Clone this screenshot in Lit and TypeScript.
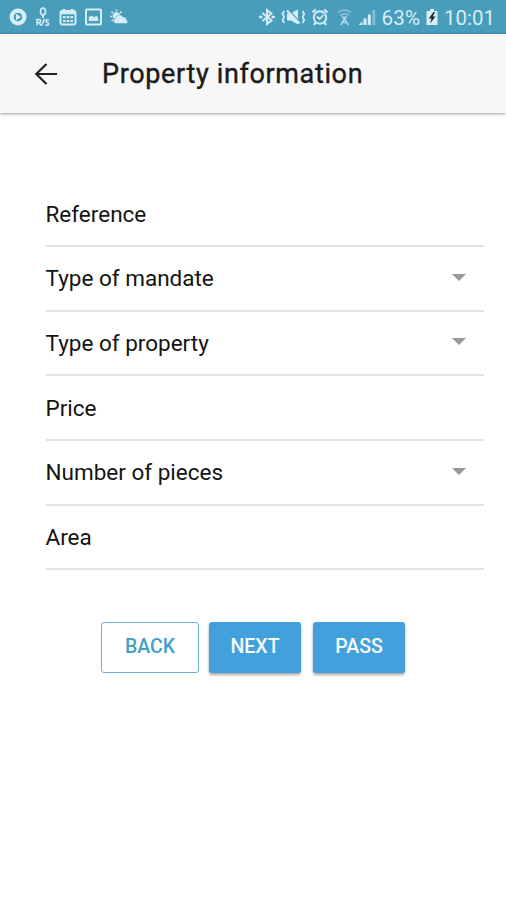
import { LitElement, html, css, svg } from "lit";
import { customElement } from "lit/decorators.js";

interface Field {
  label: string;
  select?: boolean;
}

const FIELDS: Field[] = [
  { label: "Reference" },
  { label: "Type of mandate", select: true },
  { label: "Type of property", select: true },
  { label: "Price" },
  { label: "Number of pieces", select: true },
  { label: "Area" },
];

const icon = (w: number, h: number, content: unknown) => html`
  <svg width=${w} height=${h} viewBox="0 0 ${w} ${h}" fill="none" stroke="currentColor">${content}</svg>
`;

@customElement("status-bar")
export class StatusBar extends LitElement {
  static styles = css`
    :host {
      display: flex;
      justify-content: space-between;
      align-items: center;
      height: 34px;
      box-sizing: border-box;
      padding: 0 11px 0 9px;
      background: linear-gradient(#489dbc 0 32px, #3f92b6 33px);
      color: #d5edf5;
      font: 400 20.5px Roboto, sans-serif;
    }
    .group { display: flex; align-items: center; height: 34px; }
    .left { gap: 8px; }
    svg { display: block; flex: none; }
    .right svg { margin-right: 5.5px; }
    .right .faint { opacity: 0.75; display: flex; }
    .percent { width: 39px; margin: 1px 5px 0 0; white-space: nowrap; letter-spacing: 0.2px; }
    .right .battery svg { margin-right: 6.5px; }
    .time { width: 51px; margin-top: 1px; white-space: nowrap; }
  `;

  render() {
    return html`
      <div class="group left">
        ${icon(18, 18, svg`<circle cx="9" cy="9" r="6.400" stroke-width="4.200"/><path d="M7 5.800l5 3.200-5 3.200z" fill="currentColor" stroke="none"/>`)}
        ${icon(16, 20, svg`<ellipse cx="8" cy="4.500" rx="2.500" ry="3.500" stroke-width="1.700"/><path d="M8 8v3" stroke-width="2"/><path d="M2 18.500v-6h2.200a1.500 1.500 0 0 1 0 3H2M4 15.500l2 3M6.800 18.500l2.500-6.500M14 13.200c-3.500-1.200-4 1.700-1.700 2.300 2.500.6 1.500 3.600-1.800 2.300" stroke-width="1.500"/>`)}
        ${icon(18, 18, svg`<rect x="1.500" y="3" width="15" height="13.500" rx="2" stroke-width="1.900"/><path d="M2 5h14M5 1v4M13 1v4" stroke-width="2.600"/><path d="M4 9.200h10M4 13h10" stroke-width="2.200" stroke-dasharray="2.600 1.100"/>`)}
        ${icon(17, 18, svg`<rect x="1" y="1.500" width="15" height="15" rx="1" stroke-width="2"/><path d="M3.800 13V9l3-1.500 2.500 2 2-2L13.200 10v3z" fill="currentColor" stroke="none"/>`)}
        ${icon(19, 18, svg`<circle cx="6.500" cy="8" r="3.800" fill="currentColor" stroke="none"/><path d="M6.500 1.500v2M1.500 3.500L3 5M.2 8.500h2M11.500 3.500L10 5M1.800 13l1.300-1.300" stroke-width="1.500"/><path d="M5.500 15.500a2.700 2.700 0 0 1 .2-5.300 4 4 0 0 1 7.400-1.300 3.300 3.300 0 0 1 3.500 3.400 1.700 1.700 0 0 1 .2 3.200z" fill="currentColor" stroke="#489dbc" stroke-width=".5"/>`)}
      </div>
      <div class="group right">
        ${icon(16, 18, svg`<path d="M3.500 5l9 7.500L8 16V2l4.500 3.500-9 7.500" stroke-width="2"/><path d="M.2 9h3.200M12.600 9h3.200" stroke-width="2.400"/>`)}
        ${icon(25, 18, svg`<path d="M6 5.500h3.500L17 1.500v15l-7-4H6z" fill="currentColor" stroke="none"/><path d="M7.500 2l12.500 13.500" stroke="#489dbc" stroke-width="1.800"/><path d="M6 2.500l12.500 13" stroke-width="2"/><path d="M3.200 3L1.600 6l1.500 3-1.500 3 1.600 3M21.600 3l1.600 3-1.500 3 1.500 3-1.600 3" stroke-width="1.700"/>`)}
        ${icon(18, 18, svg`<circle cx="9" cy="9.500" r="6.200" stroke-width="1.900"/><path d="M1.500 4.500l3.300-3M16.500 4.500l-3.300-3M4.500 14.500L3 17M13.500 14.500L15 17" stroke-width="2.200"/><path d="M5.800 8.500l2.800 2.500 3.800-4" stroke-width="1.800"/>`)}
        <span class="faint">${icon(18, 18, svg`<path d="M3 4.500q6.500-5 13 0M5 7.500q4.500-3.500 9 0" stroke-width="1.500" opacity=".7"/><path d="M6 8.500h7l-3.500 3.500z" fill="currentColor" stroke="none"/><path d="M9.500 11L5.500 17M9.500 11l4 6M7 14.500h5" stroke-width="1.500"/>`)}</span>
        ${icon(18, 18, svg`<path d="M.5 17l4-3.500V17z" fill="currentColor" stroke="none"/><path d="M7 10.500V17" stroke-width="3"/><path d="M11.300 6.500V17" stroke-width="3"/><path d="M15.800 2V17" stroke-width="2.800" opacity=".45"/>`)}
        <span class="percent">63%</span>
        <span class="battery">${icon(12, 18, svg`<path d="M4 1h4v2h3.500v14H.5V3H4z" fill="currentColor" stroke="none"/><path d="M7.500 4L2.800 10.500h2.800L4 15.500l5.500-7H6.700L9 4z" fill="#15252c" stroke="none"/>`)}</span>
        <span class="time">10:01</span>
      </div>
    `;
  }
}

@customElement("app-root")
export class AppRoot extends LitElement {
  static styles = css`
    :host {
      display: flex;
      flex-direction: column;
      min-height: 900px;
      background: #fff;
      font-family: Roboto, sans-serif;
      color: #141414;
    }
    header {
      display: flex;
      align-items: center;
      height: 79px;
      box-sizing: border-box;
      padding-left: 34px;
      gap: 44px;
      background: #f7f7f7;
      box-shadow: 0 1px 3px rgba(0, 0, 0, 0.38);
    }
    header svg { display: block; }
    h1 {
      margin: 1px 0 0;
      font-size: 27px;
      line-height: 36px;
      font-weight: 400;
      letter-spacing: 0.64px;
      -webkit-text-stroke: 0.4px #1b1b1b;
      white-space: nowrap;
      color: #1b1b1b;
    }
    .form { margin: 69.2px 22px 0 45.5px; }
    .row {
      display: flex;
      align-items: center;
      justify-content: space-between;
      height: 64.7px;
      box-sizing: border-box;
      padding-right: 18px;
      border-bottom: 2px solid #e3e3e3;
      font-size: 22.5px;
      white-space: nowrap;
    }
    .caret { width: 0; height: 0; margin-top: -2px; border: 7px solid transparent; border-top-color: #999; border-bottom: 0; }
    .actions { display: flex; gap: 12px; margin: 51.6px 0 0 101px; }
    button {
      width: 92px;
      height: 51px;
      box-sizing: border-box;
      border: 0;
      border-radius: 3px;
      padding: 0 0 2px;
      background: #42a1dc;
      color: #f4fbff;
      font: 500 19.5px Roboto, sans-serif;
      box-shadow: 0 2px 3px rgba(0, 0, 0, 0.35);
    }
    .outline { width: 98px; margin-right: -2px; border: 1.5px solid #69b4d0; background: #fff; color: #439fcb; box-shadow: none; }
  `;

  render() {
    return html`
      <status-bar></status-bar>
      <header>
        ${icon(24, 24, svg`<path d="M23 12H2.500M12.500 2L2.300 12l10.200 10" stroke="#222" stroke-width="2.200"/>`)}
        <h1>Property information</h1>
      </header>
      <div class="form">
        ${FIELDS.map(
          (f) => html`<div class="row"><span>${f.label}</span>${f.select ? html`<span class="caret"></span>` : ""}</div>`
        )}
      </div>
      <div class="actions">
        <button class="outline">BACK</button>
        <button>NEXT</button>
        <button>PASS</button>
      </div>
    `;
  }
}
